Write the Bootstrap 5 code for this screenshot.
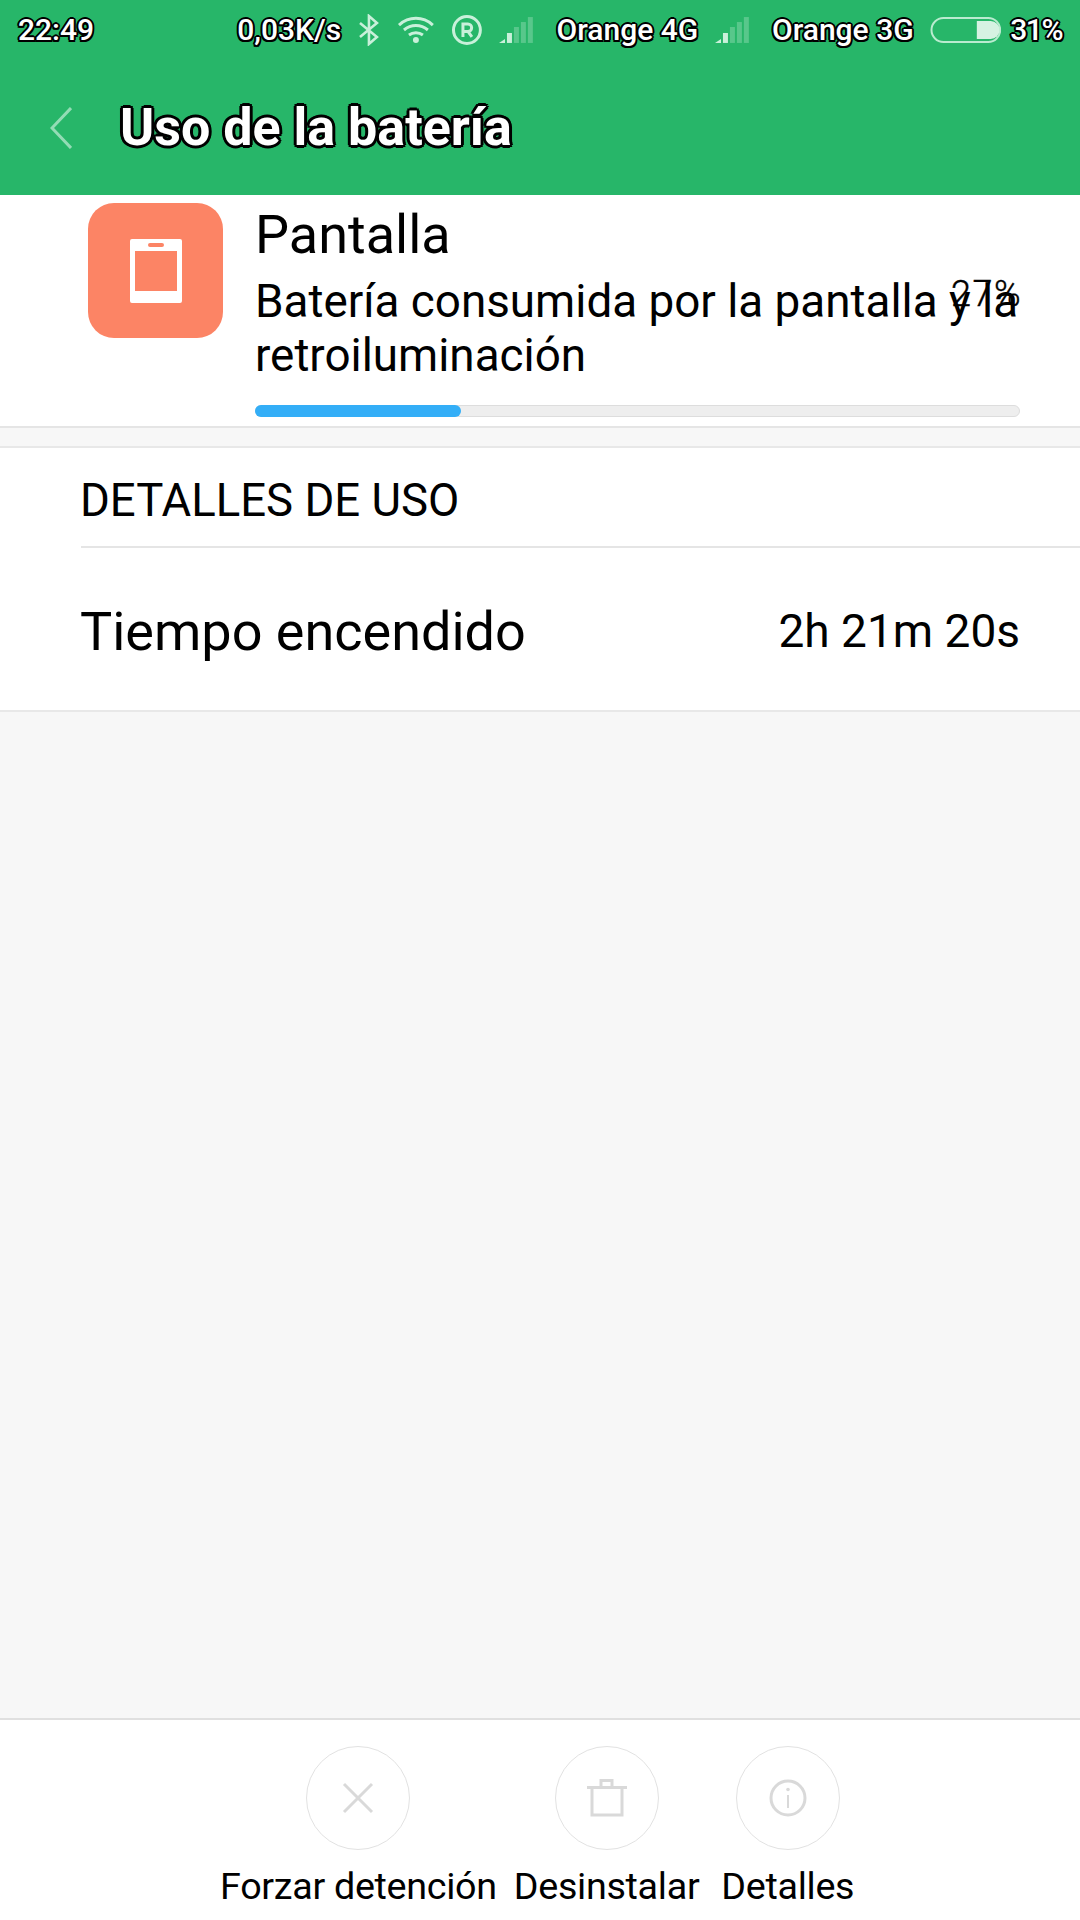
<!DOCTYPE html>
<html lang="es">
<head>
<meta charset="utf-8">
<title>Uso de la batería</title>
<link href="https://cdn.jsdelivr.net/npm/bootstrap@5.3.0/dist/css/bootstrap.min.css" rel="stylesheet">
<style>
html,body{height:1920px;margin:0}
body{width:1080px;font-family:Roboto,"Liberation Sans",sans-serif;color:#000;background:#f7f7f7;overflow:hidden}
.scr{height:1920px}
.top-green{background:#27b669;height:195px;flex:none}
.sbar{height:60px;padding:0 18px;color:#fff;font-size:30px;font-weight:500;line-height:1;white-space:nowrap}
.out{text-shadow:2px 0 0 #000,-2px 0 0 #000,0 2px 0 #000,0 -2px 0 #000,1.5px 1.5px 0 #000,-1.5px 1.5px 0 #000,1.5px -1.5px 0 #000,-1.5px -1.5px 0 #000}
.m-speed{margin-left:143px}
.m-17{margin-left:17px}
.m-16{margin-left:16px}
.m-20{margin-left:20px}
.m-19{margin-left:19px}
.m-9{margin-left:9px}
.pct-tight{letter-spacing:-1.5px}
.tbar{height:135px;padding-left:50px}
.ttl{font-size:52px;font-weight:700;color:#fff;margin-left:48px;line-height:1;text-shadow:3px 0 0 #000,-3px 0 0 #000,0 3px 0 #000,0 -3px 0 #000,2.2px 2.2px 0 #000,-2.2px 2.2px 0 #000,2.2px -2.2px 0 #000,-2.2px -2.2px 0 #000}
.hero{background:#fff;height:233px;padding:8px 60px 0 88px;border-bottom:2px solid #e5e5e5;flex:none}
.tile{width:135px;height:135px;background:#fc8465;border-radius:26px;flex:none}
.hero-body{margin-left:32px;flex:1;min-width:0}
.h-name{font-size:54px;line-height:60px;padding-top:2px}
.h-sub{font-size:45.8px;line-height:54px;margin-top:10px;white-space:nowrap}
.h-pct{right:58px;top:79px;font-size:36px;line-height:40px;font-weight:300;letter-spacing:1.5px;-webkit-text-stroke:.4px #000}
.bar-track{height:12px;background:#eee;border:1px solid #ddd;margin-top:22px;overflow:visible}
.bar-fill{background:#33aef7;height:12px;margin:-1px 0 0 -1px}
.gap-strip{height:18px;flex:none}
.sect{background:#fff;border-top:2px solid #e8e8e8;border-bottom:2px solid #e8e8e8;height:266px;flex:none;padding-left:81px}
.sect-h{height:100px;font-size:45.5px;border-bottom:2px solid #e5e5e5;padding-top:9px}
.sect-h-t{margin-left:-1px}
.sect-r{height:162px;padding:4px 60px 0 0}
.r-l{font-size:54px;margin-left:-1px}
.r-v{font-size:46px}
.foot{background:#fff;height:202px;border-top:2px solid #e0e0e0;flex:none;padding:26px 0 0 220px;gap:17px}
.foot-last{margin-left:5px}
.ring{width:104px;height:104px;border:1.5px solid #e2e2e2;border-radius:50%}
.lbl{font-size:37.7px;line-height:40px;white-space:nowrap;margin-top:16px;letter-spacing:-.3px}
</style>
</head>
<body>
<div class="scr d-flex flex-column">
  <div class="top-green d-flex flex-column">
    <div class="sbar d-flex align-items-center">
      <span class="out">22:49</span>
      <span class="out m-speed">0,03K/s</span>
      <svg class="m-17" width="22" height="32" viewBox="0 0 22 32" fill="none" stroke="#c9f0da" stroke-width="2.6"><path d="M2 9l17 14-8 7V2l8 7L2 23"/></svg>
      <svg class="m-17" width="38" height="28" viewBox="0 0 38 28" fill="none" stroke="#c9f0da" stroke-width="3"><path d="M2 9c10-9 24-9 34 0M7 14c7-6 17-6 24 0M12 19c4-3 10-3 14 0"/><circle cx="19" cy="24" r="3" fill="#c9f0da" stroke="none"/></svg>
      <svg class="m-16" width="32" height="32" viewBox="0 0 32 32" fill="none" stroke="#c9f0da" stroke-width="3"><circle cx="16" cy="16" r="13.5"/><path d="M12 23V10h5a3.700 3.700 0 0 1 0 7.500h-5M17 17.500l4 5.500"/></svg>
      <svg class="m-16" width="38" height="28" viewBox="0 0 38 28" fill="#c9f0da"><path d="M0 27l6-4v4z"/><rect x="8" y="17" width="5" height="10"/><g opacity=".3"><rect x="15" y="11" width="5" height="16"/><rect x="22" y="6" width="5" height="21"/><rect x="29" y="1" width="5" height="26"/></g></svg>
      <span class="out m-20">Orange 4G</span>
      <svg class="m-17" width="38" height="28" viewBox="0 0 38 28" fill="#c9f0da"><path d="M0 27l6-4v4z"/><rect x="8" y="17" width="5" height="10"/><g opacity=".3"><rect x="15" y="11" width="5" height="16"/><rect x="22" y="6" width="5" height="21"/><rect x="29" y="1" width="5" height="26"/></g></svg>
      <span class="out m-19">Orange 3G</span>
      <svg class="m-16" width="72" height="28" viewBox="0 0 72 28"><rect x="1.500" y="2" width="69" height="24" rx="12" fill="none" stroke="#b9ebcf" stroke-width="2"/><path d="M47 5h14a9 9 0 0 1 0 18H47z" fill="#d6f2e2"/></svg>
      <span class="out m-9 pct-tight">31%</span>
    </div>
    <div class="tbar d-flex align-items-center">
      <svg width="22" height="42" viewBox="0 0 22 42" fill="none" stroke="#93dcb5" stroke-width="3"><path d="M21 1L2 21l19 20"/></svg>
      <span class="ttl">Uso de la batería</span>
    </div>
  </div>

  <div class="hero d-flex position-relative">
    <div class="tile d-flex align-items-center justify-content-center">
      <svg width="52" height="64" viewBox="0 0 52 64"><path fill="#fff" fill-rule="evenodd" d="M2 0h48a2 2 0 0 1 2 2v60a2 2 0 0 1-2 2H2a2 2 0 0 1-2-2V2a2 2 0 0 1 2-2zm3 12v40h42V12zM20 4a2 2 0 0 0 0 4h12a2 2 0 0 0 0-4z"/></svg>
    </div>
    <div class="hero-body">
      <div class="h-name">Pantalla</div>
      <div class="h-sub">Batería consumida por la pantalla y la<br>retroiluminación</div>
      <div class="bar-track rounded-pill"><div class="bar-fill rounded-pill" style="width:27%"></div></div>
    </div>
    <div class="h-pct position-absolute">27%</div>
  </div>

  <div class="gap-strip"></div>

  <div class="sect">
    <div class="sect-h d-flex align-items-center"><span class="sect-h-t">DETALLES DE USO</span></div>
    <div class="sect-r d-flex align-items-center justify-content-between">
      <span class="r-l">Tiempo encendido</span>
      <span class="r-v">2h 21m 20s</span>
    </div>
  </div>

  <div class="flex-grow-1"></div>

  <div class="foot d-flex">
    <div class="d-flex flex-column align-items-center">
      <div class="ring d-flex align-items-center justify-content-center">
        <svg width="34" height="34" viewBox="0 0 34 34" fill="none" stroke="#d9d9d9" stroke-width="3"><path d="M3 3l28 28M31 3L3 31"/></svg>
      </div>
      <div class="lbl">Forzar detención</div>
    </div>
    <div class="d-flex flex-column align-items-center">
      <div class="ring d-flex align-items-center justify-content-center">
        <svg width="40" height="38" viewBox="0 0 40 38" fill="none" stroke="#d9d9d9" stroke-width="3"><path d="M0 8.500h40M5 8.500V36h30V8.500M14 8V1.500h11V8"/></svg>
      </div>
      <div class="lbl">Desinstalar</div>
    </div>
    <div class="foot-last d-flex flex-column align-items-center">
      <div class="ring d-flex align-items-center justify-content-center">
        <svg width="38" height="38" viewBox="0 0 38 38" fill="none" stroke="#d9d9d9" stroke-width="3"><circle cx="19" cy="19" r="17"/><path d="M19 16v13" stroke-width="2"/><circle cx="19" cy="10.500" r="1.800" fill="#d9d9d9" stroke="none"/></svg>
      </div>
      <div class="lbl">Detalles</div>
    </div>
  </div>
</div>
<script src="https://cdn.jsdelivr.net/npm/bootstrap@5.3.0/dist/js/bootstrap.bundle.min.js"></script>
</body>
</html>
